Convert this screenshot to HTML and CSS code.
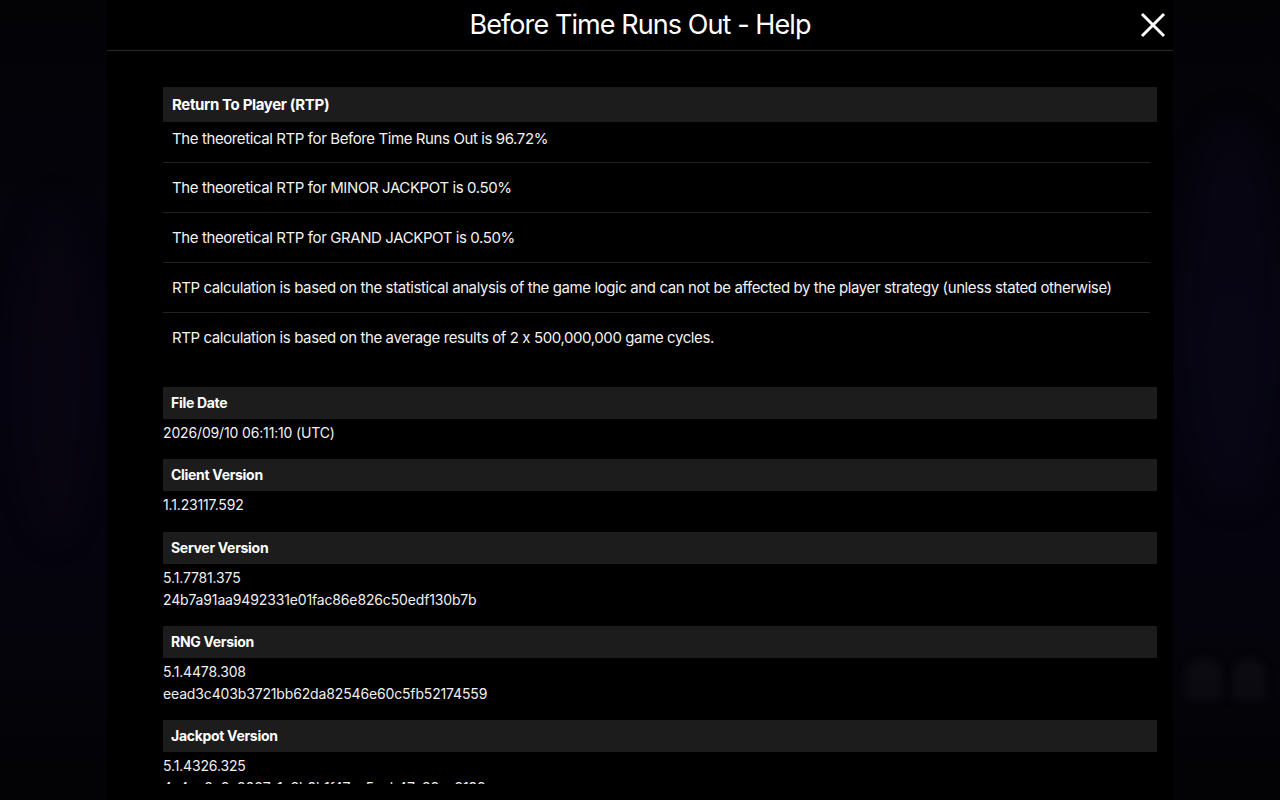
FILE: index.html
```html
<!DOCTYPE html>
<html lang="en">
<head>
<meta charset="utf-8">
<title>Before Time Runs Out - Help</title>
<link rel="stylesheet" href="styles.css">
</head>
<body>
<div class="backdrop">
  <div class="blob blob-a"></div>
  <div class="blob blob-b"></div>
  <div class="blob blob-c"></div>
  <div class="blob blob-d"></div>
</div>
<div class="modal">
  <header class="modal-header">
    <h1 class="modal-title">Before Time Runs Out - Help</h1>
    <button class="close-btn" aria-label="Close">
      <svg width="26" height="26" viewBox="0 0 26 26"><path d="M2 2 L24 24 M24 2 L2 24" stroke="#fff" stroke-width="3" fill="none"/></svg>
    </button>
  </header>
  <div class="modal-body">
    <section class="rtp">
      <h2 class="rtp-title">Return To Player (RTP)</h2>
      <div class="rtp-rows">
        <div class="rtp-row first">The theoretical RTP for Before Time Runs Out is 96.72%</div>
        <div class="rtp-row">The theoretical RTP for MINOR JACKPOT is 0.50%</div>
        <div class="rtp-row">The theoretical RTP for GRAND JACKPOT is 0.50%</div>
        <div class="rtp-row">RTP calculation is based on the statistical analysis of the game logic and can not be affected by the player strategy (unless stated otherwise)</div>
        <div class="rtp-row last">RTP calculation is based on the average results of 2 x 500,000,000 game cycles.</div>
      </div>
    </section>
    <section class="info">
      <h3 class="info-title">File Date</h3>
      <div class="info-value">2026/09/10 06:11:10 (UTC)</div>
    </section>
    <section class="info">
      <h3 class="info-title">Client Version</h3>
      <div class="info-value">1.1.23117.592</div>
    </section>
    <section class="info">
      <h3 class="info-title">Server Version</h3>
      <div class="info-value">5.1.7781.375</div>
      <div class="info-value">24b7a91aa9492331e01fac86e826c50edf130b7b</div>
    </section>
    <section class="info">
      <h3 class="info-title">RNG Version</h3>
      <div class="info-value">5.1.4478.308</div>
      <div class="info-value">eead3c403b3721bb62da82546e60c5fb52174559</div>
    </section>
    <section class="info">
      <h3 class="info-title">Jackpot Version</h3>
      <div class="info-value">5.1.4326.325</div>
      <div class="info-value">4a4ae3e8c2087a1e3b9b1f47ec5eab47e38ac2198</div>
    </section>
  </div>
</div>
</body>
</html>
```
FILE: styles.css
```css
* { box-sizing: border-box; }
html, body { margin: 0; padding: 0; }
body {
  width: 1280px;
  height: 800px;
  overflow: hidden;
  background: #05040c;
  font-family: Inter, "Liberation Sans", Arial, sans-serif;
  font-feature-settings: "calt" 0;
  color: #fff;
  position: relative;
}
.backdrop {
  position: absolute;
  inset: 0;
  background: linear-gradient(180deg, #030306 0%, #05040f 45%, #05040e 70%, #030305 100%);
  overflow: hidden;
}
.blob { position: absolute; border-radius: 50%; filter: blur(16px); }
.blob-a { left: 20px; top: 200px; width: 70px; height: 340px; background: rgba(30, 15, 35, 0.14); }
.blob-b { left: 1185px; top: 658px; width: 38px; height: 42px; background: rgba(45, 42, 48, 0.2); border-radius: 45% 45% 10% 10%; filter: blur(4px); }
.blob-c { left: 1232px; top: 658px; width: 34px; height: 42px; background: rgba(45, 42, 48, 0.2); border-radius: 45% 45% 10% 10%; filter: blur(4px); }
.blob-d { left: 1185px; top: 120px; width: 95px; height: 380px; background: rgba(14, 8, 32, 0.35); }

.modal {
  position: relative;
  width: 1066px;
  height: 800px;
  margin: 0 auto 0 107px;
  background: #000;
  display: flex;
  flex-direction: column;
}
.modal-header {
  height: 51px;
  flex: none;
  border-bottom: 1px solid #2a2a2a;
  display: flex;
  align-items: center;
  justify-content: center;
  position: relative;
}
.modal-title {
  margin: 0;
  font-size: 27px;
  font-weight: 400;
  line-height: 50px;
  letter-spacing: -0.92px;
  color: #fff;
}
.close-btn {
  position: absolute;
  right: 7px;
  top: 12px;
  width: 26px;
  height: 26px;
  padding: 0;
  border: 0;
  background: none;
  display: block;
}
.close-btn svg { display: block; }

.modal-body {
  height: 733px;
  overflow: hidden;
  padding: 36px 16px 0 56px;
}
.rtp { margin-bottom: 24px; }
.rtp-title {
  margin: 0;
  height: 35px;
  line-height: 35px;
  padding-left: 9px;
  background: #1c1c1c;
  font-size: 15px;
  font-weight: 700;
  letter-spacing: -0.35px;
}
.rtp-rows { margin-right: 7px; }
.rtp-row {
  font-size: 15px;
  line-height: 18px;
  padding: 16px 9px 15px;
  border-bottom: 1px solid #222;
  color: #f2f2f2;
  letter-spacing: -0.4px;
  white-space: nowrap;
}
.rtp-row.first { padding-top: 8px; padding-bottom: 14px; }
.rtp-row.last { border-bottom: 0; padding-bottom: 16px; }

.info { margin-bottom: 15.3px; }
.info-title {
  margin: 0 0 3px;
  height: 32px;
  line-height: 32px;
  padding-left: 8px;
  background: #1c1c1c;
  font-size: 14px;
  font-weight: 700;
  letter-spacing: -0.3px;
}
.info-value {
  font-size: 14px;
  line-height: 22px;
  color: #f0f0f0;
  letter-spacing: -0.15px;
}
```
